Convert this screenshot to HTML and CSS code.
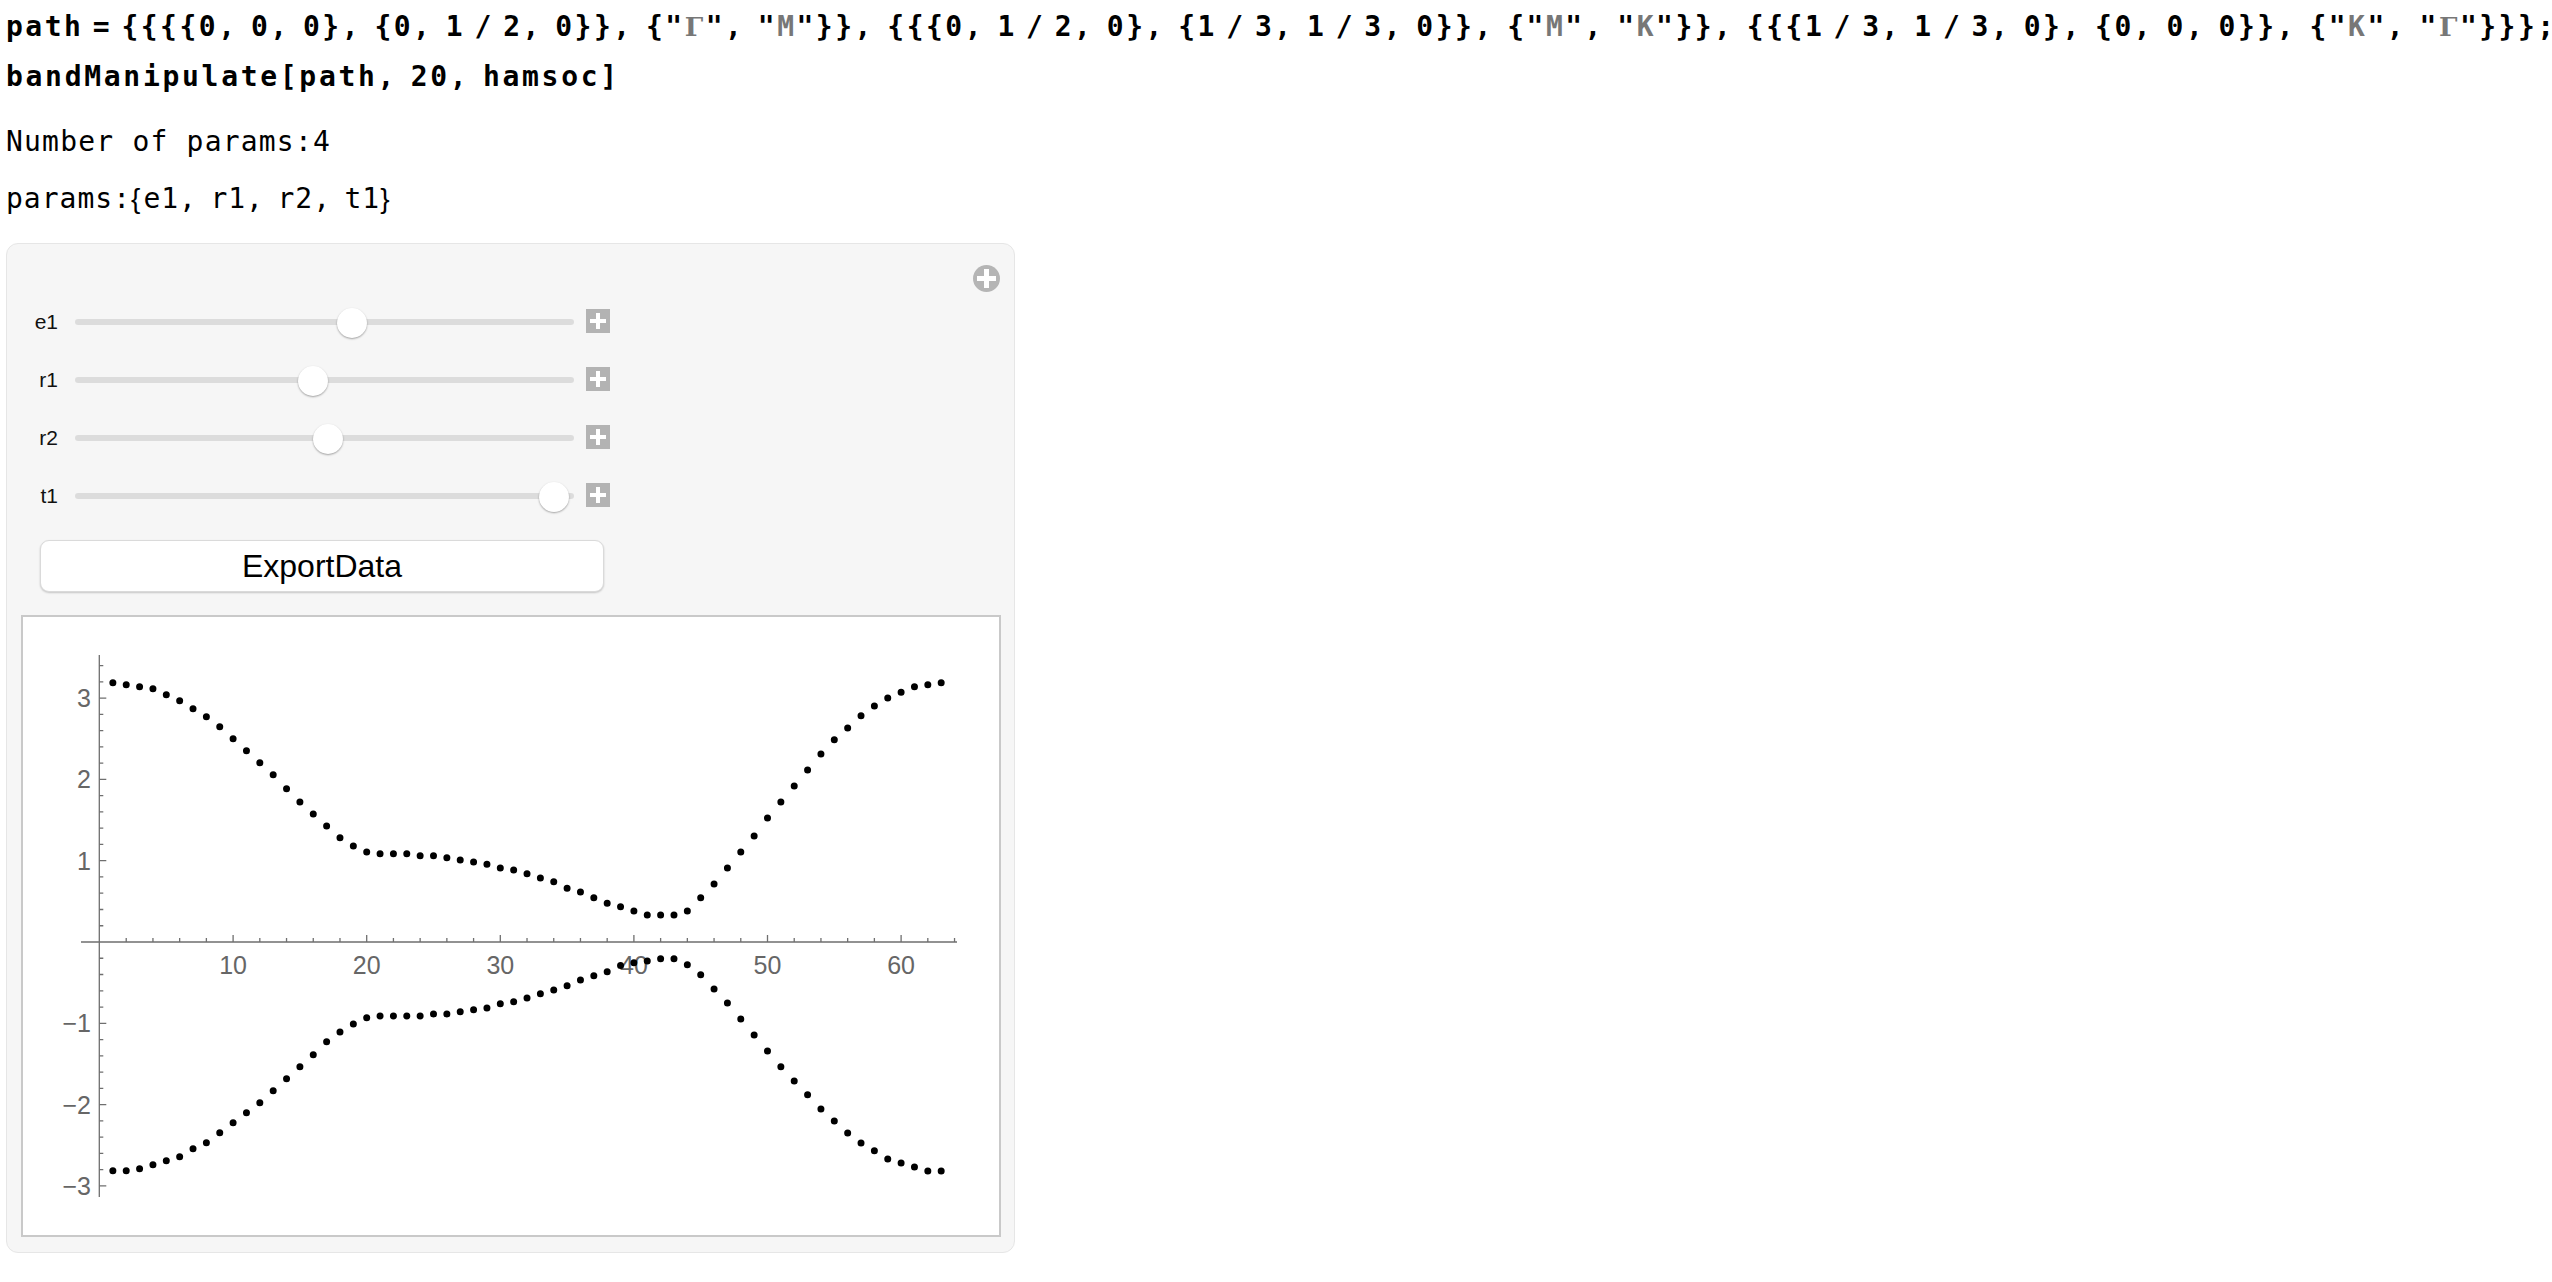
FILE: index.html
```html
<!DOCTYPE html>
<html>
<head>
<meta charset="utf-8">
<link rel="stylesheet" href="styles.css">
</head>
<body>
<div class="nb">
<div class="in">
<div class="ln">path<span class="eq">=</span>{{{{0, 0, 0}, {0, 1<span class="sl">/</span>2, 0}}, {"<span class="str gk">Γ</span>", "<span class="str">M</span>"}}, {{{0, 1<span class="sl">/</span>2, 0}, {1<span class="sl">/</span>3, 1<span class="sl">/</span>3, 0}}, {"<span class="str">M</span>", "<span class="str">K</span>"}}, {{{1<span class="sl">/</span>3, 1<span class="sl">/</span>3, 0}, {0, 0, 0}}, {"<span class="str">K</span>", "<span class="str gk">Γ</span>"}}};</div>
<div class="ln ln2">bandManipulate[path, 20, hamsoc]</div>
</div>
<div class="out o1">Number of params:4</div>
<div class="out o2">params:<span class="br">{</span>e1, r1, r2, t1<span class="br">}</span></div>

<div class="panel">
  <svg class="cplus" width="27" height="27" viewBox="0 0 27 27"><circle cx="13.5" cy="13.5" r="13.5" fill="#b5b5b5"/><path d="M13.5 4v19M4 13.5h19" stroke="#fff" stroke-width="5"/></svg>
  <div class="controls">
    <div class="row">
      <div class="lab">e1</div>
      <div class="track"><div class="knob" style="left:277px"></div></div>
      <svg class="pls" width="24" height="24" viewBox="0 0 24 24"><rect width="24" height="24" fill="#b3b3b3"/><path d="M12 4v16M4 12h16" stroke="#fff" stroke-width="4"/></svg>
    </div>
    <div class="row">
      <div class="lab">r1</div>
      <div class="track"><div class="knob" style="left:238px"></div></div>
      <svg class="pls" width="24" height="24" viewBox="0 0 24 24"><rect width="24" height="24" fill="#b3b3b3"/><path d="M12 4v16M4 12h16" stroke="#fff" stroke-width="4"/></svg>
    </div>
    <div class="row">
      <div class="lab">r2</div>
      <div class="track"><div class="knob" style="left:253px"></div></div>
      <svg class="pls" width="24" height="24" viewBox="0 0 24 24"><rect width="24" height="24" fill="#b3b3b3"/><path d="M12 4v16M4 12h16" stroke="#fff" stroke-width="4"/></svg>
    </div>
    <div class="row">
      <div class="lab">t1</div>
      <div class="track"><div class="knob" style="left:479px"></div></div>
      <svg class="pls" width="24" height="24" viewBox="0 0 24 24"><rect width="24" height="24" fill="#b3b3b3"/><path d="M12 4v16M4 12h16" stroke="#fff" stroke-width="4"/></svg>
    </div>
  </div>
  <div class="btn">ExportData</div>
  <div class="plot">
    <svg class="plotsvg" width="976" height="618" viewBox="23 617 976 618">
      <g class="axes" stroke="#6f6f6f" stroke-width="1.3" fill="none">
        <path d="M99.3 655V1197M81 942H957"/>
        <path d="M99.3 698.1h7M99.3 779.4h7M99.3 860.7h7M99.3 1023.3h7M99.3 1104.6h7M99.3 1185.9h7"/>
        <path d="M99.3 665.58h4M99.3 681.84h4M99.3 714.36h4M99.3 730.62h4M99.3 746.88h4M99.3 763.14h4M99.3 795.66h4M99.3 811.92h4M99.3 828.18h4M99.3 844.44h4M99.3 876.96h4M99.3 893.22h4M99.3 909.48h4M99.3 925.74h4M99.3 958.26h4M99.3 974.52h4M99.3 990.78h4M99.3 1007.04h4M99.3 1039.56h4M99.3 1055.82h4M99.3 1072.08h4M99.3 1088.34h4M99.3 1120.86h4M99.3 1137.12h4M99.3 1153.38h4M99.3 1169.64h4"/>
        <path d="M233.1 942v-7M366.7 942v-7M500.3 942v-7M633.9 942v-7M767.5 942v-7M901.1 942v-7"/>
        <path d="M126.22 942v-4M152.94 942v-4M179.66 942v-4M206.38 942v-4M259.82 942v-4M286.54 942v-4M313.26 942v-4M339.98 942v-4M393.42 942v-4M420.14 942v-4M446.86 942v-4M473.58 942v-4M527.02 942v-4M553.74 942v-4M580.46 942v-4M607.18 942v-4M660.62 942v-4M687.34 942v-4M714.06 942v-4M740.78 942v-4M794.22 942v-4M820.94 942v-4M847.66 942v-4M874.38 942v-4M927.82 942v-4M954.54 942v-4"/>
      </g>
      <g class="ticklab">
        <text x="91" y="707" text-anchor="end">3</text>
        <text x="91" y="788.3" text-anchor="end">2</text>
        <text x="91" y="869.6" text-anchor="end">1</text>
        <text x="91" y="1032.2" text-anchor="end">−1</text>
        <text x="91" y="1113.5" text-anchor="end">−2</text>
        <text x="91" y="1194.8" text-anchor="end">−3</text>
        <text x="233.1" y="974" text-anchor="middle">10</text>
        <text x="366.7" y="974" text-anchor="middle">20</text>
        <text x="500.3" y="974" text-anchor="middle">30</text>
        <text x="633.9" y="974" text-anchor="middle">40</text>
        <text x="767.5" y="974" text-anchor="middle">50</text>
        <text x="901.1" y="974" text-anchor="middle">60</text>
      </g>
      <g transform="translate(99.5 942) scale(13.36 -81.3)">
        <path class="dots" d="M1 3.189h0M2 3.165h0M3 3.140h0M4 3.116h0M5 3.042h0M6 2.968h0M7 2.870h0M8 2.771h0M9 2.648h0M10 2.501h0M11 2.353h0M12 2.205h0M13 2.058h0M14 1.886h0M15 1.723h0M16 1.573h0M17 1.428h0M18 1.283h0M19 1.180h0M20 1.107h0M21 1.086h0M22 1.086h0M23 1.086h0M24 1.061h0M25 1.061h0M26 1.035h0M27 1.009h0M28 0.983h0M29 0.957h0M30 0.910h0M31 0.885h0M32 0.838h0M33 0.786h0M34 0.740h0M35 0.662h0M36 0.616h0M37 0.543h0M38 0.476h0M39 0.434h0M40 0.381h0M41 0.332h0M42 0.332h0M43 0.332h0M44 0.381h0M45 0.543h0M46 0.714h0M47 0.910h0M48 1.107h0M49 1.304h0M50 1.526h0M51 1.723h0M52 1.919h0M53 2.116h0M54 2.312h0M55 2.488h0M56 2.633h0M57 2.783h0M58 2.902h0M59 3.000h0M60 3.073h0M61 3.140h0M62 3.165h0M63 3.189h0"/>
        <path class="dots" d="M1 -2.813h0M2 -2.813h0M3 -2.788h0M4 -2.739h0M5 -2.690h0M6 -2.641h0M7 -2.542h0M8 -2.469h0M9 -2.346h0M10 -2.223h0M11 -2.100h0M12 -1.977h0M13 -1.829h0M14 -1.681h0M15 -1.534h0M16 -1.386h0M17 -1.226h0M18 -1.107h0M19 -1.009h0M20 -0.931h0M21 -0.910h0M22 -0.910h0M23 -0.910h0M24 -0.910h0M25 -0.885h0M26 -0.885h0M27 -0.859h0M28 -0.833h0M29 -0.812h0M30 -0.760h0M31 -0.735h0M32 -0.688h0M33 -0.636h0M34 -0.590h0M35 -0.538h0M36 -0.466h0M37 -0.414h0M38 -0.367h0M39 -0.290h0M40 -0.255h0M41 -0.234h0M42 -0.205h0M43 -0.205h0M44 -0.279h0M45 -0.402h0M46 -0.578h0M47 -0.750h0M48 -0.947h0M49 -1.144h0M50 -1.341h0M51 -1.533h0M52 -1.710h0M53 -1.878h0M54 -2.054h0M55 -2.202h0M56 -2.349h0M57 -2.472h0M58 -2.567h0M59 -2.669h0M60 -2.718h0M61 -2.767h0M62 -2.817h0M63 -2.817h0"/>
      </g>
    </svg>
  </div>
</div>
</div>
</body>
</html>
```

FILE: styles.css
```css
html, body {
  margin: 0;
  padding: 0;
  background: #ffffff;
}

.nb {
  padding: 10px 0 0 6px;
  font-family: "DejaVu Sans Mono", monospace;
  font-size: 28px;
  color: #000;
}

.in {
  font-weight: bold;
  line-height: 34px;
  letter-spacing: 2.5px;
  word-spacing: -6px;
}

.ln {
  white-space: pre;
}

.ln2 {
  margin-top: 16px;
  letter-spacing: 2.7px;
}

.eq {
  padding: 0 9.3px;
}

.sl {
  padding: 0 9.3px;
}

.str {
  color: #777777;
}

.gk {
  font-family: "DejaVu Serif", serif;
  font-size: 26px;
}

.out {
  line-height: 34px;
  white-space: pre;
  letter-spacing: 1px;
}

.o1 {
  margin-top: 31px;
  letter-spacing: 1.2px;
}

.o2 {
  margin-top: 23px;
  word-spacing: -4.4px;
}

.br {
  font-family: "Liberation Sans", sans-serif;
  letter-spacing: 3px;
}

.panel {
  position: relative;
  margin-top: 27px;
  width: 1009px;
  box-sizing: border-box;
  border: 1px solid #e6e6e6;
  border-radius: 12px;
  background: #f6f6f6;
  padding-bottom: 15px;
  letter-spacing: normal;
  word-spacing: normal;
  font-family: "Liberation Sans", Arial, sans-serif;
}

.cplus {
  position: absolute;
  top: 21px;
  right: 14px;
  display: block;
}

.controls {
  padding-top: 49px;
}

.row {
  display: flex;
  align-items: center;
  height: 58px;
}

.lab {
  width: 51px;
  text-align: right;
  font-size: 21px;
  color: #111;
}

.track {
  position: relative;
  margin-left: 17px;
  width: 499px;
  height: 6px;
  border-radius: 3px;
  background: #dcdcdc;
}

.knob {
  position: absolute;
  top: 50%;
  width: 30px;
  height: 30px;
  margin: -14px 0 0 -15px;
  border-radius: 50%;
  background: #ffffff;
  box-shadow: 0 1px 2px rgba(0, 0, 0, 0.35);
}

.pls {
  display: block;
  margin-left: 12px;
  margin-top: -3px;
}

.btn {
  margin: 15px 0 0 33px;
  width: 564px;
  height: 52px;
  box-sizing: border-box;
  border: 1px solid #dadada;
  border-radius: 9px;
  background: #ffffff;
  box-shadow: 0 1px 2px rgba(0, 0, 0, 0.2);
  display: flex;
  align-items: center;
  justify-content: center;
  font-size: 32px;
  color: #000;
}

.plot {
  margin: 23px 0 0 14px;
  width: 980px;
  height: 622px;
  box-sizing: border-box;
  border: 2px solid #c9c9c9;
  background: #ffffff;
}

.plotsvg {
  display: block;
}

.ticklab text {
  font-family: "Liberation Sans", Arial, sans-serif;
  font-size: 25px;
  fill: #666666;
}

.dots {
  fill: none;
  stroke: #000;
  stroke-width: 7;
  stroke-linecap: round;
  vector-effect: non-scaling-stroke;
}
```
